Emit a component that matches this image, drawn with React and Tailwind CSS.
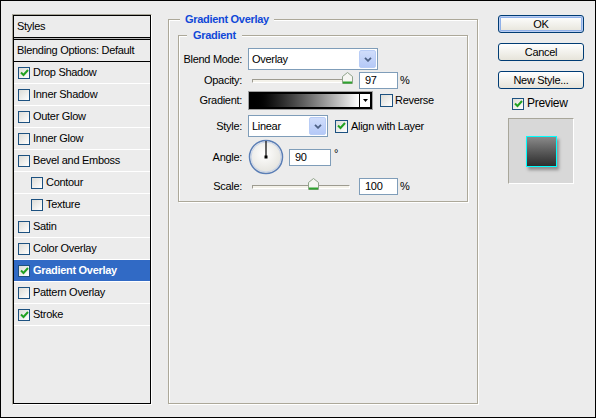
import React from "react";

const Check = ({ checked, size = "w-[12px] h-[12px]" }) => (
  <span
    className={`${size} shrink-0 border border-[#1c5180] bg-linear-to-br from-[#dcdcd7] to-white flex items-center justify-center`}
  >
    {checked && (
      <svg width="9" height="8" viewBox="0 0 9 8">
        <path d="M1 3.5 L3.5 6 L8 1" stroke="#21a121" strokeWidth="2" fill="none" />
      </svg>
    )}
  </span>
);

const Chevron = () => (
  <svg width="8" height="5" viewBox="0 0 8 5">
    <path d="M1 0.8 L4 3.8 L7 0.8" stroke="#4d6185" strokeWidth="1.8" fill="none" />
  </svg>
);

const Select = ({ value, w }) => (
  <div className={`${w} h-[22px] border border-[#7f9db9] bg-white flex items-center justify-between pl-[3px] pr-px`}>
    <span>{value}</span>
    <span className="w-[17px] h-[18px] rounded-[2px] border border-[#b9cdf6] bg-linear-to-b from-[#d0ddfb] to-[#b5c9f7] flex items-center justify-center">
      <Chevron />
    </span>
  </div>
);

const Thumb = () => (
  <svg width="11" height="12" viewBox="0 0 11 12">
    <path d="M0.5 11.5 V4.5 L5.5 0.5 L10.5 4.5 V11.5 Z" fill="#f6f6f2" stroke="#8fa38a" />
    <path d="M1 10.5 H10" stroke="#2fa32f" strokeWidth="2" />
  </svg>
);

const Slider = ({ left }) => (
  <div className="relative w-[98px] h-[4px] ml-[4px] border-t border-l border-[#9d9b90] border-b border-r border-b-white border-r-white bg-[#f4f2ea]">
    <div className="absolute top-[-8px]" style={{ left }}>
      <Thumb />
    </div>
  </div>
);

const Input = ({ value, w = "w-[39px]" }) => (
  <div className={`${w} h-[17px] border border-[#7f9db9] bg-white pl-[5px] flex items-center`}>{value}</div>
);

const Row = ({ label, className, children }) => (
  <div className={`flex items-center ${className}`}>
    <div className="w-[64px] text-right pr-px">{label}</div>
    <div className="ml-[5px] flex items-center">{children}</div>
  </div>
);

const styleItems = [
  { name: "Drop Shadow", checked: true },
  { name: "Inner Shadow" },
  { name: "Outer Glow" },
  { name: "Inner Glow" },
  { name: "Bevel and Emboss" },
  { name: "Contour", sub: true },
  { name: "Texture", sub: true },
  { name: "Satin" },
  { name: "Color Overlay" },
  { name: "Gradient Overlay", checked: true, active: true },
  { name: "Pattern Overlay" },
  { name: "Stroke", checked: true },
];

const Button = ({ children, primary }) => (
  <div
    className={`w-[86px] h-[18px] rounded-[3px] border border-[#003c74] bg-linear-to-b from-white to-[#e6e4da] flex items-center justify-center ${
      primary ? "shadow-[inset_0_0_0_1px_#b9cdf3,inset_0_0_0_2px_#8fb0e8]" : ""
    }`}
  >
    {children}
  </div>
);

export default function App() {
  return (
    <div className="w-[596px] h-[418px] border border-black bg-[#ececec] flex items-start text-[11px] leading-[13px] text-black font-['Liberation_Sans',Arial,sans-serif] tracking-[-0.3px]">
      {/* styles list */}
      <div className="ml-[11px] mt-[13px] w-[140px] h-[391px] border-t border-l border-[#a8a69a] border-r border-b border-r-white border-b-white flex">
        <div className="flex-1 border border-black flex flex-col">
          <div className="h-[22px] border-b border-black pl-[3px] flex items-center">Styles</div>
          <div className="h-[2px] border-b border-black bg-[#b8b8b8]" />
          <div className="h-[22px] border-b border-black pl-[3px] flex items-center">Blending Options: Default</div>
          {styleItems.map((it) => (
            <div
              key={it.name}
              className={`h-[22px] border-b border-white flex items-center gap-[3px] ${it.sub ? "pl-[17px]" : "pl-[4px]"} ${
                it.active ? "bg-[#316ac5] text-white font-bold" : ""
              }`}
            >
              <Check checked={it.checked} />
              <span>{it.name}</span>
            </div>
          ))}
        </div>
      </div>

      {/* settings */}
      <fieldset className="ml-[16px] mt-[12px] w-[310px] h-[391px] border border-[#aca899] shadow-[inset_1px_1px_0_white,1px_1px_0_white]">
        <legend className="ml-[11px] px-[5px] bg-[#ececec] font-bold text-[#1048d8]">Gradient Overlay</legend>
        <fieldset className="ml-[9px] mt-[3px] w-[290px] border border-[#aca899] shadow-[inset_1px_1px_0_white,1px_1px_0_white] pb-[6px]">
          <legend className="ml-[8px] px-[6px] bg-[#ececec] font-bold text-[#1048d8]">Gradient</legend>
          <Row label="Blend Mode:" className="mt-[6px] h-[22px]">
            <Select value="Overlay" w="w-[130px]" />
          </Row>
          <Row label="Opacity:" className="mt-[2px] h-[17px]">
            <Slider left={89} />
            <span className="ml-[9px]"><Input value="97" /></span>
            <span className="ml-[2px]">%</span>
          </Row>
          <Row label="Gradient:" className="mt-[2px] h-[19px]">
            <div className="w-[125px] h-[19px] border border-[#a0a0a0] flex">
              <div className="flex-1 border-2 border-black flex">
                <div className="flex-1 bg-linear-to-r from-black to-white" />
                <div className="w-[11px] border-l border-black bg-white flex items-center justify-center">
                  <svg width="5" height="3" viewBox="0 0 5 3">
                    <path d="M0 0 H5 L2.5 3 Z" fill="black" />
                  </svg>
                </div>
              </div>
            </div>
            <span className="ml-[7px] flex items-center gap-[2px]">
              <Check size="w-[13px] h-[13px]" />
              Reverse
            </span>
          </Row>
          <Row label="Style:" className="mt-[5px] h-[22px]">
            <Select value="Linear" w="w-[80px]" />
            <span className="ml-[7px] flex items-center gap-[3px]">
              <Check checked size="w-[13px] h-[13px]" />
              Align with Layer
            </span>
          </Row>
          <Row label="Angle:" className="mt-[1px] h-[38px]">
            <svg width="36" height="38" viewBox="0 0 36 38">
              <defs>
                <radialGradient id="dial" cx="0.45" cy="0.4" r="0.6">
                  <stop offset="0" stopColor="#ffffff" />
                  <stop offset="1" stopColor="#e4e3dd" />
                </radialGradient>
              </defs>
              <circle cx="18" cy="19" r="16.5" fill="url(#dial)" stroke="#5a7eb6" strokeWidth="1.5" />
              <circle cx="18" cy="19" r="15" fill="none" stroke="#c8d4ea" strokeWidth="1" />
              <path d="M18 19 V3" stroke="black" strokeWidth="1.2" />
              <rect x="16.5" y="17.5" width="3" height="3" fill="black" />
            </svg>
            <span className="ml-[5px]"><Input value="90" w="w-[42px]" /></span>
            <span className="ml-[3px] self-start mt-[9px]">°</span>
          </Row>
          <Row label="Scale:" className="mt-[2px] h-[17px]">
            <Slider left={55} />
            <span className="ml-[9px]"><Input value="100" /></span>
            <span className="ml-[2px]">%</span>
          </Row>
        </fieldset>
      </fieldset>

      {/* buttons */}
      <div className="ml-[20px] mt-[14px] flex flex-col items-center">
        <Button primary>OK</Button>
        <div className="mt-[10px]"><Button>Cancel</Button></div>
        <div className="mt-[10px]"><Button>New Style...</Button></div>
        <div className="mt-[8px] self-start ml-[14px] flex items-center gap-[3px] text-[12px]">
          <Check checked />
          <span>Preview</span>
        </div>
        <div className="mt-[8px] w-[66px] h-[66px] border-t border-l border-[#a8a69a] border-r border-b border-r-white border-b-white bg-[#d8d8d8] flex items-center justify-center">
          <div className="w-[31px] h-[31px] border border-[#00ffff] bg-linear-to-b from-[#8a8a8a] to-[#2e2e2e] shadow-[2px_3px_3px_rgba(0,0,0,0.35)]" />
        </div>
      </div>
    </div>
  );
}
